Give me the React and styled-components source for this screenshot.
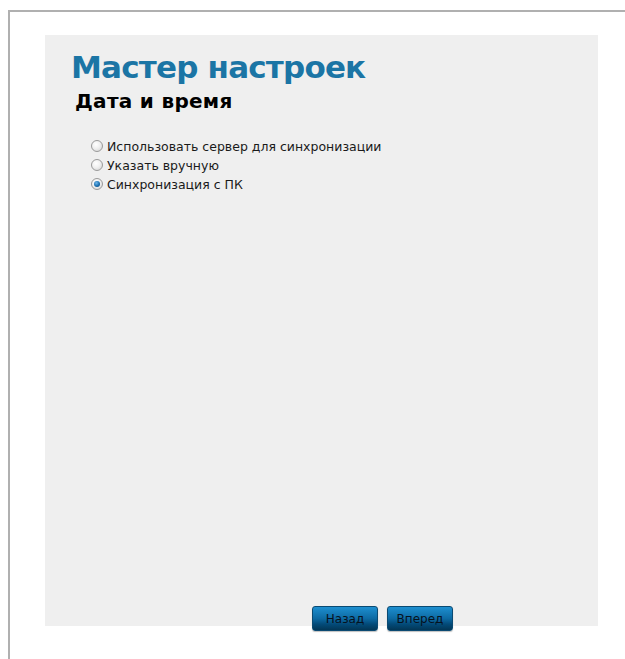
import React, { useState } from "react";
import styled, { createGlobalStyle } from "styled-components";

const GlobalStyle = createGlobalStyle`
  html, body {
    margin: 0;
    padding: 0;
    background: #ffffff;
  }
  body {
    font-family: "DejaVu Sans", Verdana, sans-serif;
  }
`;

const Frame = styled.div`
  margin: 10px 0 0 8px;
  min-height: 649px;
  border-top: 2px solid #b0b0b0;
  border-left: 2px solid #b0b0b0;
  box-sizing: border-box;
  padding: 23px 0 0 35px;
`;

const Panel = styled.div`
  width: 553px;
  height: 591px;
  background: #efefef;
  display: flex;
  flex-direction: column;
  box-sizing: border-box;
  padding: 13px 0 0 26px;
`;

const Title = styled.h1`
  margin: 0;
  font-size: 31px;
  font-weight: bold;
  line-height: 38px;
  color: #1b75a5;
  letter-spacing: -0.8px;
`;

const Subtitle = styled.h2`
  margin: 3px 0 0 4px;
  font-size: 20px;
  font-weight: bold;
  line-height: 24px;
  color: #000;
  letter-spacing: 0.3px;
`;

const Options = styled.div`
  flex: 1;
  display: flex;
  flex-direction: column;
  gap: 1px;
  margin: 24px 0 0 20px;
`;

const Option = styled.label`
  display: flex;
  align-items: center;
  gap: 4px;
  height: 18px;
  font-size: 12.5px;
  color: #1a1a1a;
  cursor: pointer;
`;

const RadioMark = styled.span`
  width: 12px;
  height: 12px;
  border-radius: 50%;
  box-sizing: border-box;
  border: 1px solid #9a9a9a;
  background: radial-gradient(circle at 40% 35%, #ffffff 0%, #f0f0f0 45%, #cfcfcf 100%);
  display: flex;
  align-items: center;
  justify-content: center;

  &::after {
    content: "";
    width: 6px;
    height: 6px;
    border-radius: 50%;
    background: radial-gradient(circle at 40% 35%, #6fb6ea 0%, #1a6fb0 55%, #0c3f70 100%);
    display: ${(p) => (p.$checked ? "block" : "none")};
  }
`;

const Footer = styled.div`
  display: flex;
  gap: 9px;
  padding-left: 241px;
  margin-bottom: -5px;
`;

const Button = styled.button`
  width: 66px;
  height: 25px;
  border: 1px solid #0b4a72;
  border-radius: 3px;
  background: linear-gradient(#1e8fd0 0%, #0d6aa3 50%, #034a78 75%, #023656 100%);
  box-shadow: 0 1px 1px rgba(0, 0, 0, 0.25);
  font-family: "DejaVu Sans", Verdana, sans-serif;
  font-size: 12px;
  color: #06121e;
  padding: 0;
  cursor: pointer;
`;

const choices = [
  "Использовать сервер для синхронизации",
  "Указать вручную",
  "Синхронизация с ПК",
];

export default function App() {
  const [mode, setMode] = useState(2);

  return (
    <>
      <GlobalStyle />
      <Frame>
        <Panel>
          <Title>Мастер настроек</Title>
          <Subtitle>Дата и время</Subtitle>
          <Options>
            {choices.map((text, i) => (
              <Option key={text} onClick={() => setMode(i)}>
                <RadioMark $checked={mode === i} />
                {text}
              </Option>
            ))}
          </Options>
          <Footer>
            <Button>Назад</Button>
            <Button>Вперед</Button>
          </Footer>
        </Panel>
      </Frame>
    </>
  );
}
